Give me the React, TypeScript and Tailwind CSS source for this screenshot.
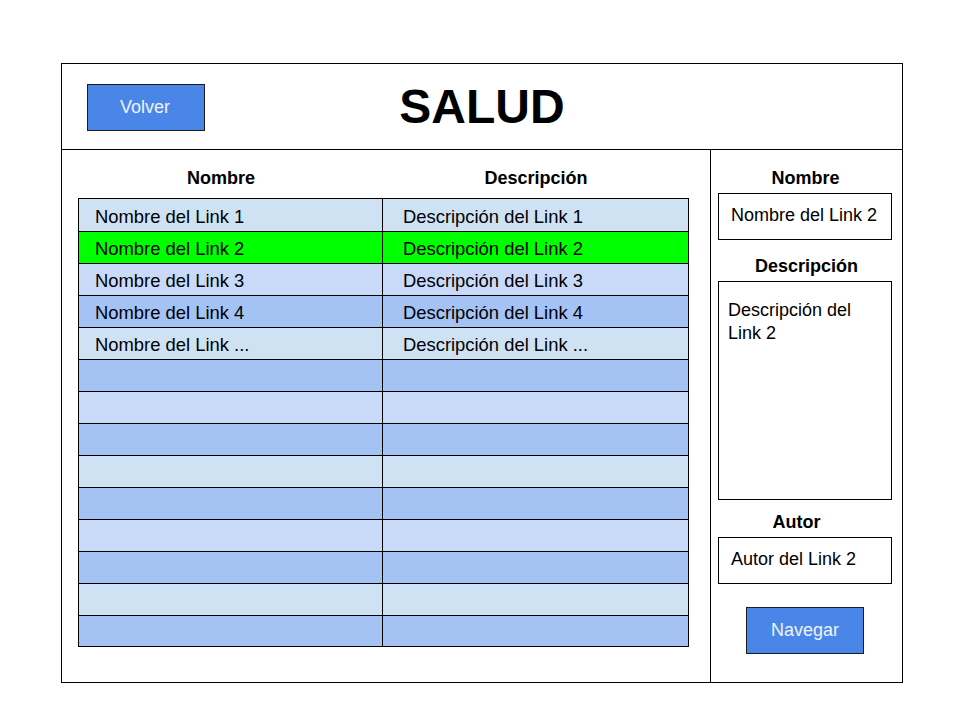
import React from "react";

const rows: { name: string; desc: string; bg: string }[] = [
  { name: "Nombre del Link 1", desc: "Descripción del Link 1", bg: "bg-[#cfe2f3]" },
  { name: "Nombre del Link 2", desc: "Descripción del Link 2", bg: "bg-[#00ff00]" },
  { name: "Nombre del Link 3", desc: "Descripción del Link 3", bg: "bg-[#c9daf8]" },
  { name: "Nombre del Link 4", desc: "Descripción del Link 4", bg: "bg-[#a4c2f4]" },
  { name: "Nombre del Link ...", desc: "Descripción del Link ...", bg: "bg-[#cfe2f3]" },
  { name: "", desc: "", bg: "bg-[#a4c2f4]" },
  { name: "", desc: "", bg: "bg-[#c9daf8]" },
  { name: "", desc: "", bg: "bg-[#a4c2f4]" },
  { name: "", desc: "", bg: "bg-[#cfe2f3]" },
  { name: "", desc: "", bg: "bg-[#a4c2f4]" },
  { name: "", desc: "", bg: "bg-[#c9daf8]" },
  { name: "", desc: "", bg: "bg-[#a4c2f4]" },
  { name: "", desc: "", bg: "bg-[#cfe2f3]" },
  { name: "", desc: "", bg: "bg-[#a4c2f4]" },
];

export default function App() {
  return (
    <div
      className="w-[960px] h-[720px] bg-white pt-[63px] pl-[61px] text-black"
      style={{ fontFamily: '"Liberation Sans", Arial, sans-serif' }}
    >
      <div className="w-[842px] h-[620px] border border-black flex flex-col">
        {/* Header */}
        <div className="h-[86px] border-b border-black flex items-start">
          <div className="w-[143px] pl-[25px] pt-[20px] shrink-0">
            <button className="w-[118px] h-[47px] bg-[#4a86e8] border border-[#1c1c1c] text-[#eef3fd] text-[18px] flex items-center justify-center pr-[2px]">
              Volver
            </button>
          </div>
          <div className="flex-1 h-full flex items-center justify-center">
            <h1 className="text-[48px] font-bold leading-none">SALUD</h1>
          </div>
          <div className="w-[143px] shrink-0" />
        </div>

        {/* Body */}
        <div className="flex-1 flex">
          {/* Left: table */}
          <div className="w-[649px] border-r border-black px-[16px]">
            <div className="grid grid-cols-[304px_1fr] h-[48px] pt-[8px] text-[18px] font-bold">
              <div className="flex items-center justify-center pr-[18px]">Nombre</div>
              <div className="flex items-center justify-center pr-[4px]">Descripción</div>
            </div>
            <div className="w-[611px] border border-black">
              {rows.map((r, i) => (
                <div
                  key={i}
                  className={`grid grid-cols-[304px_1fr] text-[18.4px] ${r.bg} ${i > 0 ? "border-t border-black" : ""} ${i === 13 ? "h-[31px]" : "h-[32px]"}`}
                >
                  <div className="border-r border-black flex items-center pl-[16px] pt-[3px] whitespace-nowrap">
                    {r.name}
                  </div>
                  <div className="flex items-center pl-[20px] pt-[3px] whitespace-nowrap">{r.desc}</div>
                </div>
              ))}
            </div>
          </div>

          {/* Right: details */}
          <div className="flex-1 flex flex-col text-[18px]">
            <div className="h-[43px] pt-[13px] pr-[2px] flex items-center justify-center font-bold">Nombre</div>
            <div className="ml-[7px] w-[174px] h-[47px] border border-black flex items-center pl-[12px] pb-[3px] whitespace-nowrap">
              Nombre del Link 2
            </div>
            <div className="h-[41px] pt-[12px] flex items-center justify-center font-bold">Descripción</div>
            <div className="ml-[7px] w-[174px] h-[219px] border border-black pt-[17px] pl-[9px] pr-[12px] leading-[23px]">
              Descripción del Link 2
            </div>
            <div className="h-[37px] pt-[7px] pr-[20px] flex items-center justify-center font-bold">Autor</div>
            <div className="ml-[7px] w-[174px] h-[47px] border border-black flex items-center pl-[12px] pb-[2px] whitespace-nowrap">
              Autor del Link 2
            </div>
            <div className="mt-[23px] ml-[35px]">
              <button className="w-[118px] h-[47px] bg-[#4a86e8] border border-[#1c1c1c] text-[#eef3fd] text-[18px] flex items-center justify-center">
                Navegar
              </button>
            </div>
          </div>
        </div>
      </div>
    </div>
  );
}
